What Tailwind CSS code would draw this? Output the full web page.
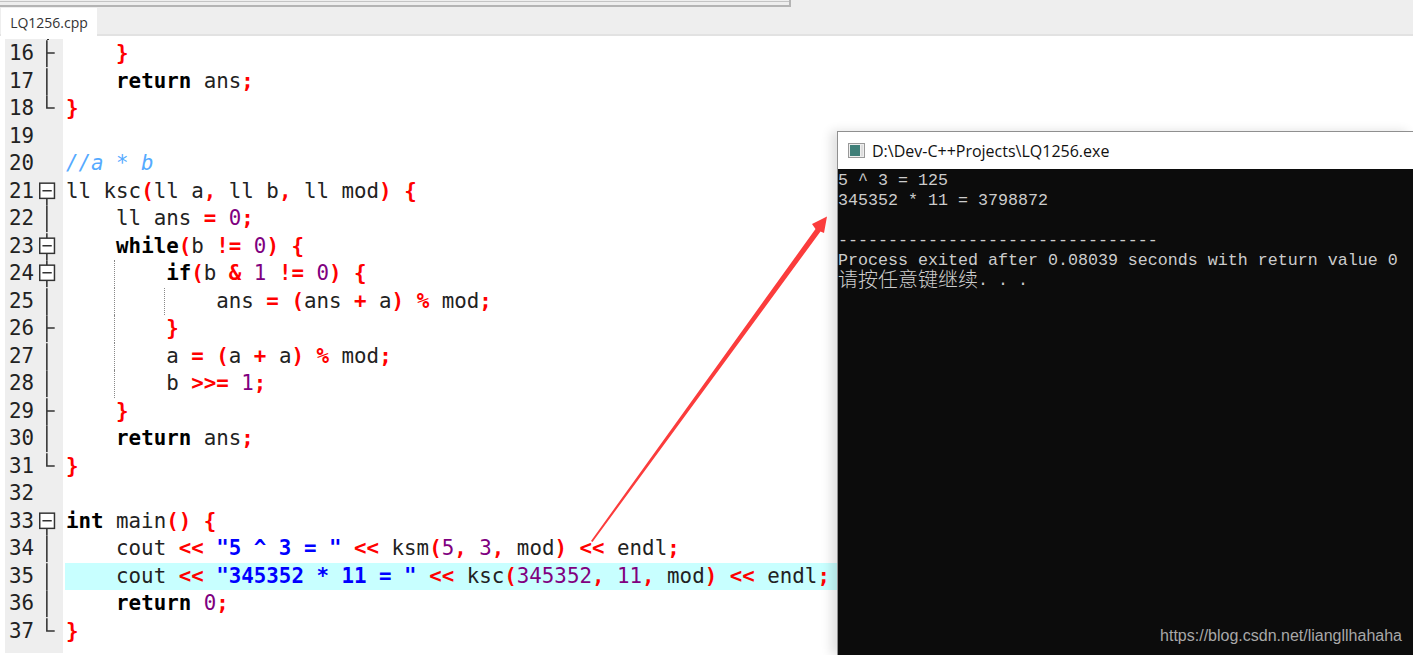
<!doctype html>
<html>
<head>
<meta charset="utf-8">
<script src="https://cdn.jsdelivr.net/npm/@tailwindcss/browser@4"></script>
</head>
<body class="relative w-[1413px] h-[655px] overflow-hidden bg-white font-['DejaVu_Sans_Mono',monospace]">
  <svg class="hidden">
    <defs>
      <symbol id="line" viewBox="0 0 24 27.5"><path d="M8 0V27.5" stroke="#333" stroke-width="1.6" fill="none"/></symbol>
      <symbol id="tick" viewBox="0 0 24 27.5"><path d="M8 0V27.5M8 13H16" stroke="#333" stroke-width="1.6" fill="none"/></symbol>
      <symbol id="end" viewBox="0 0 24 27.5"><path d="M8 0V13H16" stroke="#333" stroke-width="1.6" fill="none"/></symbol>
      <symbol id="box" viewBox="0 0 24 27.5"><path d="M8 20V27.5" stroke="#333" stroke-width="1.6" fill="none"/><rect x="0.75" y="5" width="15" height="15.5" fill="#fff" stroke="#333" stroke-width="1.5"/><path d="M3.5 12.75H13" stroke="#333" stroke-width="1.6"/></symbol>
      <symbol id="boxm" viewBox="0 0 24 27.5"><path d="M8 0V27.5" stroke="#333" stroke-width="1.6" fill="none"/><rect x="0.75" y="5" width="15" height="15.5" fill="#fff" stroke="#333" stroke-width="1.5"/><path d="M3.5 12.75H13" stroke="#333" stroke-width="1.6"/></symbol>
    </defs>
  </svg>

  <!-- window top edge -->
  <div class="bg-[#eeeeee]">
    <div class="h-[7px] w-[791px] border-b-2 border-r-2 border-[#b4b4b4]"><div class="h-[2px] border-b border-[#c4c4c4]"></div></div>
  </div>

  <!-- tab bar -->
  <div class="h-[29px] bg-[#eeeeee] border-b-2 border-[#e2e2e2] flex items-end pl-[1px]">
    <div class="h-[28px] -mb-[2px] w-[96px] bg-white flex items-center justify-center font-['Open_Sans',sans-serif] text-[14px] text-[#333]">LQ1256.cpp</div>
  </div>

  <!-- editor -->
  <div class="flex flex-col pl-[5px] pt-[3px] text-[20.8px] leading-[27.5px] text-[#222] whitespace-pre">
    <div class="w-[58px] h-[1px] bg-[#eeeeee] pl-[42px]"><div class="w-[1.6px] h-full bg-[#333]"></div></div>
    <div class="flex h-[27.5px]"><div class="w-[58px] flex bg-[#eeeeee] pl-[4px]"><span class="w-[31px]">16</span><svg class="w-[24px] h-[27.5px]"><use href="#tick"/></svg></div><div class="pl-[3px] flex-1"><span>    </span><span class="font-bold text-[#ff0000]">}</span></div></div>
    <div class="flex h-[27.5px]"><div class="w-[58px] flex bg-[#eeeeee] pl-[4px]"><span class="w-[31px]">17</span><svg class="w-[24px] h-[27.5px]"><use href="#line"/></svg></div><div class="pl-[3px] flex-1"><span>    </span><b class="text-black">return</b> ans<b class="text-[#ff0000]">;</b></div></div>
    <div class="flex h-[27.5px]"><div class="w-[58px] flex bg-[#eeeeee] pl-[4px]"><span class="w-[31px]">18</span><svg class="w-[24px] h-[27.5px]"><use href="#end"/></svg></div><div class="pl-[3px] flex-1"><b class="text-[#ff0000]">}</b></div></div>
    <div class="flex h-[27.5px]"><div class="w-[58px] flex bg-[#eeeeee] pl-[4px]"><span class="w-[31px]">19</span></div><div class="pl-[3px] flex-1"></div></div>
    <div class="flex h-[27.5px]"><div class="w-[58px] flex bg-[#eeeeee] pl-[4px]"><span class="w-[31px]">20</span></div><div class="pl-[3px] flex-1 italic text-[#55aaff]">//a * b</div></div>
    <div class="flex h-[27.5px]"><div class="w-[58px] flex bg-[#eeeeee] pl-[4px]"><span class="w-[31px]">21</span><svg class="w-[24px] h-[27.5px]"><use href="#box"/></svg></div><div class="pl-[3px] flex-1">ll ksc<b class="text-[#ff0000]">(</b>ll a<b class="text-[#ff0000]">,</b> ll b<b class="text-[#ff0000]">,</b> ll mod<b class="text-[#ff0000]">)</b> <b class="text-[#ff0000]">{</b></div></div>
    <div class="flex h-[27.5px]"><div class="w-[58px] flex bg-[#eeeeee] pl-[4px]"><span class="w-[31px]">22</span><svg class="w-[24px] h-[27.5px]"><use href="#line"/></svg></div><div class="pl-[3px] flex-1">    ll ans <b class="text-[#ff0000]">=</b> <span class="text-[#800080]">0</span><b class="text-[#ff0000]">;</b></div></div>
    <div class="flex h-[27.5px]"><div class="w-[58px] flex bg-[#eeeeee] pl-[4px]"><span class="w-[31px]">23</span><svg class="w-[24px] h-[27.5px]"><use href="#boxm"/></svg></div><div class="pl-[3px] flex-1">    <b class="text-black">while</b><b class="text-[#ff0000]">(</b>b <b class="text-[#ff0000]">!=</b> <span class="text-[#800080]">0</span><b class="text-[#ff0000]">)</b> <b class="text-[#ff0000]">{</b></div></div>
    <div class="flex h-[27.5px]"><div class="w-[58px] flex bg-[#eeeeee] pl-[4px]"><span class="w-[31px]">24</span><svg class="w-[24px] h-[27.5px]"><use href="#boxm"/></svg></div><div class="pl-[3px] flex-1 relative"><i class="absolute left-[51px] inset-y-0 border-l border-dotted border-[#888]"></i>        <b class="text-black">if</b><b class="text-[#ff0000]">(</b>b <b class="text-[#ff0000]">&amp;</b> <span class="text-[#800080]">1</span> <b class="text-[#ff0000]">!=</b> <span class="text-[#800080]">0</span><b class="text-[#ff0000]">)</b> <b class="text-[#ff0000]">{</b></div></div>
    <div class="flex h-[27.5px]"><div class="w-[58px] flex bg-[#eeeeee] pl-[4px]"><span class="w-[31px]">25</span><svg class="w-[24px] h-[27.5px]"><use href="#line"/></svg></div><div class="pl-[3px] flex-1 relative"><i class="absolute left-[51px] inset-y-0 border-l border-dotted border-[#888]"></i><i class="absolute left-[101px] inset-y-0 border-l border-dotted border-[#888]"></i>            ans <b class="text-[#ff0000]">=</b> <b class="text-[#ff0000]">(</b>ans <b class="text-[#ff0000]">+</b> a<b class="text-[#ff0000]">)</b> <b class="text-[#ff0000]">%</b> mod<b class="text-[#ff0000]">;</b></div></div>
    <div class="flex h-[27.5px]"><div class="w-[58px] flex bg-[#eeeeee] pl-[4px]"><span class="w-[31px]">26</span><svg class="w-[24px] h-[27.5px]"><use href="#tick"/></svg></div><div class="pl-[3px] flex-1 relative"><i class="absolute left-[51px] inset-y-0 border-l border-dotted border-[#888]"></i>        <b class="text-[#ff0000]">}</b></div></div>
    <div class="flex h-[27.5px]"><div class="w-[58px] flex bg-[#eeeeee] pl-[4px]"><span class="w-[31px]">27</span><svg class="w-[24px] h-[27.5px]"><use href="#line"/></svg></div><div class="pl-[3px] flex-1 relative"><i class="absolute left-[51px] inset-y-0 border-l border-dotted border-[#888]"></i>        a <b class="text-[#ff0000]">=</b> <b class="text-[#ff0000]">(</b>a <b class="text-[#ff0000]">+</b> a<b class="text-[#ff0000]">)</b> <b class="text-[#ff0000]">%</b> mod<b class="text-[#ff0000]">;</b></div></div>
    <div class="flex h-[27.5px]"><div class="w-[58px] flex bg-[#eeeeee] pl-[4px]"><span class="w-[31px]">28</span><svg class="w-[24px] h-[27.5px]"><use href="#line"/></svg></div><div class="pl-[3px] flex-1 relative"><i class="absolute left-[51px] inset-y-0 border-l border-dotted border-[#888]"></i>        b <b class="text-[#ff0000]">&gt;&gt;=</b> <span class="text-[#800080]">1</span><b class="text-[#ff0000]">;</b></div></div>
    <div class="flex h-[27.5px]"><div class="w-[58px] flex bg-[#eeeeee] pl-[4px]"><span class="w-[31px]">29</span><svg class="w-[24px] h-[27.5px]"><use href="#tick"/></svg></div><div class="pl-[3px] flex-1">    <b class="text-[#ff0000]">}</b></div></div>
    <div class="flex h-[27.5px]"><div class="w-[58px] flex bg-[#eeeeee] pl-[4px]"><span class="w-[31px]">30</span><svg class="w-[24px] h-[27.5px]"><use href="#line"/></svg></div><div class="pl-[3px] flex-1">    <b class="text-black">return</b> ans<b class="text-[#ff0000]">;</b></div></div>
    <div class="flex h-[27.5px]"><div class="w-[58px] flex bg-[#eeeeee] pl-[4px]"><span class="w-[31px]">31</span><svg class="w-[24px] h-[27.5px]"><use href="#end"/></svg></div><div class="pl-[3px] flex-1"><b class="text-[#ff0000]">}</b></div></div>
    <div class="flex h-[27.5px]"><div class="w-[58px] flex bg-[#eeeeee] pl-[4px]"><span class="w-[31px]">32</span></div><div class="pl-[3px] flex-1"></div></div>
    <div class="flex h-[27.5px]"><div class="w-[58px] flex bg-[#eeeeee] pl-[4px]"><span class="w-[31px]">33</span><svg class="w-[24px] h-[27.5px]"><use href="#box"/></svg></div><div class="pl-[3px] flex-1"><b class="text-black">int</b> main<b class="text-[#ff0000]">()</b> <b class="text-[#ff0000]">{</b></div></div>
    <div class="flex h-[27.5px]"><div class="w-[58px] flex bg-[#eeeeee] pl-[4px]"><span class="w-[31px]">34</span><svg class="w-[24px] h-[27.5px]"><use href="#line"/></svg></div><div class="pl-[3px] flex-1">    cout <b class="text-[#ff0000]">&lt;&lt;</b> <b class="text-[#0000ff]">"5 ^ 3 = "</b> <b class="text-[#ff0000]">&lt;&lt;</b> ksm<b class="text-[#ff0000]">(</b><span class="text-[#800080]">5</span><b class="text-[#ff0000]">,</b> <span class="text-[#800080]">3</span><b class="text-[#ff0000]">,</b> mod<b class="text-[#ff0000]">)</b> <b class="text-[#ff0000]">&lt;&lt;</b> endl<b class="text-[#ff0000]">;</b></div></div>
    <div class="flex h-[27.5px]"><div class="w-[58px] flex bg-[#eeeeee] pl-[4px]"><span class="w-[31px]">35</span><svg class="w-[24px] h-[27.5px]"><use href="#line"/></svg></div><div class="ml-[2px] pl-[1px] flex-1 bg-[#c8ffff]">    cout <b class="text-[#ff0000]">&lt;&lt;</b> <b class="text-[#0000ff]">"345352 * 11 = "</b> <b class="text-[#ff0000]">&lt;&lt;</b> ksc<b class="text-[#ff0000]">(</b><span class="text-[#800080]">345352</span><b class="text-[#ff0000]">,</b> <span class="text-[#800080]">11</span><b class="text-[#ff0000]">,</b> mod<b class="text-[#ff0000]">)</b> <b class="text-[#ff0000]">&lt;&lt;</b> endl<b class="text-[#ff0000]">;</b></div></div>
    <div class="flex h-[27.5px]"><div class="w-[58px] flex bg-[#eeeeee] pl-[4px]"><span class="w-[31px]">36</span><svg class="w-[24px] h-[27.5px]"><use href="#line"/></svg></div><div class="pl-[3px] flex-1">    <b class="text-black">return</b> <span class="text-[#800080]">0</span><b class="text-[#ff0000]">;</b></div></div>
    <div class="flex h-[27.5px]"><div class="w-[58px] flex bg-[#eeeeee] pl-[4px]"><span class="w-[31px]">37</span><svg class="w-[24px] h-[27.5px]"><use href="#end"/></svg></div><div class="pl-[3px] flex-1"><b class="text-[#ff0000]">}</b></div></div>
    <div class="w-[58px] h-[8px] bg-[#eeeeee]"></div>
  </div>

  <!-- console window laid over the editor -->
  <div class="absolute left-[837px] top-[131px] w-[576px] h-[524px] border-l border-t border-[#8f8f8f] shadow-[-6px_0_10px_rgba(0,0,0,0.12)] flex flex-col">
    <div class="h-[37px] bg-white flex items-center pl-[10px] gap-[7px] font-['Open_Sans',sans-serif] text-[16px] text-[#111]">
      <svg width="17" height="15" viewBox="0 0 17 15"><rect x="0.5" y="0.5" width="16" height="14" fill="#eee" stroke="#999"/><rect x="2" y="2" width="10" height="11" fill="#3f7f78"/><rect x="13" y="2" width="2" height="11" fill="#ddd"/></svg>
      <span>D:\Dev-C++Projects\LQ1256.exe</span>
    </div>
    <div class="flex-1 pt-[2px] bg-[#0c0c0c] text-[#cccccc] font-['Liberation_Mono',monospace] text-[16.67px] leading-[20px] whitespace-pre">5 ^ 3 = 125
345352 * 11 = 3798872

--------------------------------
Process exited after 0.08039 seconds with return value 0
<span class="align-top relative -top-[2px] font-['Noto_Sans_CJK_SC',sans-serif] text-[20px] leading-[20px] font-light">请按任意键继续</span>. . .</div>
  </div>

  <!-- watermark -->
  <div class="absolute right-[11px] bottom-[9px] font-['Liberation_Sans',sans-serif] text-[16px] leading-[20px] text-[#a8a8a8]">https://blog.csdn.net/liangllhahaha</div>

  <!-- arrow annotation -->
  <svg class="absolute inset-0" width="1413" height="655" viewBox="0 0 1413 655">
    <path d="M591 541L815.5 229L812 224L827 216.5L824 233L820.5 231.5L592.5 542Z" fill="#fb3c3c"/>
  </svg>
</body>
</html>
